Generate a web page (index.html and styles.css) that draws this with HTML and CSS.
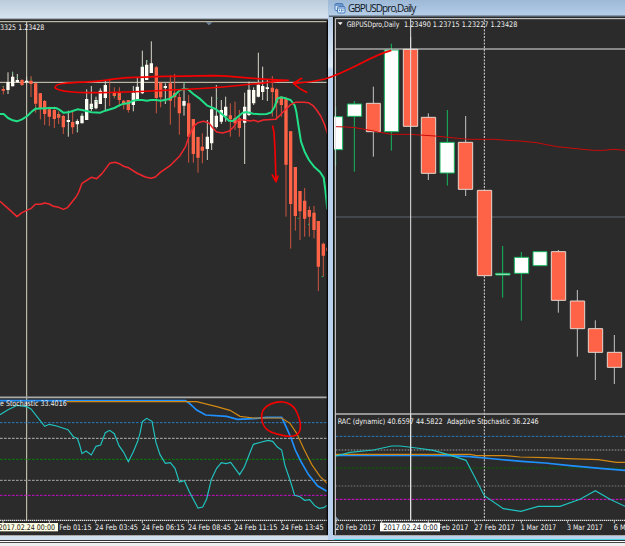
FILE: index.html
```html
<!DOCTYPE html>
<html lang="en">
<head>
<meta charset="utf-8">
<title>GBPUSDpro</title>
<link rel="stylesheet" href="styles.css">
</head>
<body>
<main class="workspace">
<section class="window window-left">
<header class="titlebar titlebar-left"></header>
<svg class="plot" viewBox="0 63 984 1542">
<rect class="bg" x="0" y="63" width="984" height="1542"/>
<path class="cream" d="M0 65H984"/>
<path d="M617 67h21l-7 5l-4 4l-4-4z" fill="#72849a"/>
<g class="guide"><path d="M0 247H984M80 66V1560"/></g>
<path class="wick orange" d="M10 258V283M66 237V258M93 228V291M107 249V338M121 279V358M134 300V375M148 320V378M163 320V384M176 334V372M190 345V402M218 335V402M329 236V318M343 262V295M358 262V320M371 300V328M385 300V338M469 198V340M482 248V322"/>
<path class="wick white" d="M24 217V282M38 215V259M52 222V249M80 230V250M205 332V410M232 358V397M246 340V370M260 268V360M274 258V333M288 290V328M301 265V312M316 243V330M400 258V334M412 232V303M427 152V282M440 180V240M454 124V219M496 250V312"/>
<path class="body orange" d="M10 267V272M66 240V255M93 242V252M107 250V311M121 280V325M134 303V342M148 328V350M163 330V357M176 342V353M190 348V382M218 366V382M343 278V288M358 278V300M371 302V313M385 300V330M469 202V294M482 248V292"/>
<path class="body white" d="M24 246V270M38 230V259M52 240V247M80 242V247M205 360V366M232 363V373M246 347V370M260 297V360M274 311V327M288 300V325M301 272V312M316 255V294M400 278V315M412 260V300M427 200V280M440 194V240M454 190V219M496 258V264"/>
<g transform="translate(480 0)">
<path class="wick orange" d="M31 225V374M44 222V322M58 280V404M86 285V488M100 357V488M114 410V518M127 400V490M211 310V410M225 305V390M238 330V410M337 228V350M350 265V358M364 288V350M378 290V650M392 393V746M406 501V692M420 573V720M434 564V710M448 619V710M462 618V715M475 663V873M490 728V830"/>
<path class="wick white" d="M72 250V347M142 360V480M155 290V450M169 255V385M184 300V372M197 290V365M254 278V492M267 245V348M281 262V315M295 158V292M308 200V300M322 238V303"/>
<path class="body orange" d="M31 250V302M44 278V292M58 291V340M86 310V410M100 357V462M114 411V473M127 440V452M211 346V358M225 355V370M238 355V384M337 263V276M350 268V310M364 290V315M378 294V494M392 394V612M406 501V648M420 573V634M434 602V656M448 630V650M462 638V690M475 663V800M490 731V767M498 748h6"/>
<path class="body white" d="M72 303V317M142 410V447M155 328V430M169 347V381M184 330V365M197 320V347M254 320V368M267 269V345M281 270V310M295 254V290M308 258V276M322 262V267"/>
</g>
<path class="tick" d="M8 260h3M36 219h3M50 232h3M92 237h3M105 322h3M120 326h3M176 345h3M203 392h3M232 390h3M245 345h3M275 322h3M287 304h3M342 290h3M357 290h3M370 312h3M386 318h3M428 198h3M440 183h3M496 304h3M552 250h3M650 295h3M680 350h3M893 655h3M924 673h3M965 830h4"/>
<path class="green" d="M0 342H11L24 354L38 361L51 364L66 358L82 348L96 334L107 326L150 324L168 324L178 329L190 338L205 337L218 333L232 328L246 330L260 333L274 337L301 338L316 332L343 324L358 316L371 311L385 310L400 302L412 300H427L440 302L454 300H469L482 302L496 299L508 297L525 285L538 272L552 266L564 268L580 282L598 295L622 317L647 327L669 345L687 362L698 363L712 352L728 338L740 336L760 341L780 343L800 342L814 337L824 320L832 296L842 292L857 295L872 300L884 316L889 335L895 375L903 425L914 455L927 480L944 502L960 516L971 533L976 570L982 628"/>
<path class="red" d="M0 604L24 625L51 650L66 638L80 631L94 625L106 613L122 613L134 609L148 612L160 619L176 622L190 628L202 623L216 606L228 591L236 577L246 550L260 541L274 532L290 536L306 521L329 490L345 487L358 491L371 499L385 503L410 519L436 531L453 535L466 531L481 517L510 497L540 467L557 439L568 406L580 380L594 368L610 364L626 368L638 383L650 396L668 399L686 394L699 383L714 361L728 359L750 363L762 361L774 365L790 360L826 358L840 346L855 330L872 314L886 307H912L925 308L938 316L950 330L962 348L973 372L984 406"/>
<path d="M0 1192H984" stroke="#a9a9a9" stroke-width="5"/>
<g fill="none">
<path class="dash" stroke="#2879bb" d="M0 1268H984"/><path class="dash" stroke="#b5b5b5" d="M0 1315H984"/><path class="dash" stroke="#087d08" d="M0 1378H984"/><path class="dash" stroke="#aaa" d="M0 1441H984"/><path class="dash" stroke="#c410c4" d="M0 1486H984"/>
<path class="blueline" d="M0 1202H556L566 1208L590 1230L617 1245L680 1249L712 1258L760 1256L800 1252H845L858 1280L872 1311L886 1350L903 1385L925 1423L953 1458L984 1475"/>
<path class="orangeline" d="M200 1205H590L650 1220L690 1231L720 1249L760 1254H845L870 1270L890 1300L913 1350L935 1393L960 1429L984 1452"/>
<path class="cyanline" d="M0 1244L24 1229L52 1216L80 1220L93 1227L134 1279L148 1273L170 1278L204 1289L220 1310L232 1315L239 1335L246 1361L258 1353L274 1365L288 1339L302 1335L316 1298L329 1291L343 1301L357 1337L371 1357L385 1385L400 1355L413 1324L420 1300L427 1265L440 1255L456 1264L468 1328L480 1364L496 1390L511 1388L525 1405L538 1446L553 1442L568 1475L594 1524L608 1521L620 1497L634 1438L650 1405L664 1388L678 1391L692 1387L719 1424L733 1401L748 1363L760 1333L785 1326L804 1321L818 1324L832 1341L845 1350L855 1397L870 1440L884 1486L900 1490L914 1501L929 1499L944 1517L958 1525L971 1523L984 1514"/>
</g>
<path stroke="#ddd" stroke-width="4" stroke-dasharray="4 2" d="M0 1561H984"/>
<path class="axis-tick" d="M9 1561v9M148 1561v9M287 1561v9M427 1561v9M565 1561v9M705 1561v9M845 1561v9"/>
<g class="label">
<text x="0" y="90" textLength="133" lengthAdjust="spacingAndGlyphs">3325 1.23428</text>
<text x="0" y="1218" textLength="200" lengthAdjust="spacingAndGlyphs">e Stochastic 33.4016</text>
<text x="178" y="1589" textLength="97" lengthAdjust="spacingAndGlyphs">Feb 01:15</text><text x="285" y="1589" textLength="129" lengthAdjust="spacingAndGlyphs">24 Feb 03:45</text><text x="425" y="1589" textLength="129" lengthAdjust="spacingAndGlyphs">24 Feb 06:15</text><text x="564" y="1589" textLength="129" lengthAdjust="spacingAndGlyphs">24 Feb 08:45</text><text x="703" y="1589" textLength="129" lengthAdjust="spacingAndGlyphs">24 Feb 11:15</text><text x="842" y="1589" textLength="129" lengthAdjust="spacingAndGlyphs">24 Feb 13:45</text>
</g>
<rect x="0" y="1569" width="174" height="25" fill="#ffffe4"/>
<text class="label dark" x="-4" y="1589" textLength="169" lengthAdjust="spacingAndGlyphs">2017.02.24 00:00</text>
<path class="edge" d="M982 63V1605"/>
</svg>
<div class="bottom-frame"></div>
</section>
<section class="window window-right">
<header class="titlebar titlebar-right">
<svg class="app-icon" viewBox="0 0 12 12"><g fill="#d7e9fb" stroke="#4b7cba"><rect x="1" y="1.5" width="8" height="7" rx="1"/><path d="M1 3h8" stroke-width="1.5"/><rect x="3.5" y="4.5" width="7.5" height="6.5" rx="1"/><path d="M3.5 6H11M5.5 9V7.5M7.5 9.5V7.5M9 9V7.5"/></g></svg>
<span class="title">GBPUSDpro,Daily</span>
</header>
<div class="frame">
<svg class="plot" viewBox="1002 51 873 1554">
<rect class="bg" x="1002" y="51" width="873" height="1554"/>
<g transform="translate(975 0)">
<path d="M38 67h15l-7 8z" fill="#fff"/>
<path stroke="#697078" stroke-width="2.5" d="M30 651H900"/>
<path stroke="#ddd" stroke-width="3" stroke-dasharray="6 4" d="M478 58V1560"/>
<g class="green-candle"><path d="M32 320V498M88 303V515M199 131V452M367 330V557M533 738V893M589 756V962"/><path d="M10 350H53V449H10zM67 312H110V349H67zM178 150H221V395H178zM345 427H388V519H345zM568 772H611V820H568zM624 755H666V797H624zM512 820H555V825H512z"/></g>
<g class="orange-candle"><path d="M145 260V470M257 110V148M310 340V540M422 348V588M700 750V938M757 870V1070M811 961V1140M868 1005V1152"/><path d="M124 310H166V395H124zM235 148H278V379H235zM289 352H332V520H289zM400 427H443V568H400zM457 571H500V827H457zM679 755H722V901H679zM736 903H779V986H736zM790 986H833V1057H790zM847 1057H890V1102H847z"/></g>
<path class="thin-red" d="M32 380L65 381L90 383L130 390L165 397L200 403H255L330 408L400 415L435 418H505L547 421L585 423L635 428L695 440L765 447L805 451H835L865 448L900 451"/>
<path class="white-guide" d="M30 147H900M257 57V1560"/>
<path stroke="#b9b9b9" stroke-width="5" d="M32 1242H900"/>
</g>
<g fill="none">
<path class="dash" stroke="#2879bb" d="M1007 1309H1875"/><path class="dash dots" stroke="#999" d="M1007 1350H1875"/><path class="dash" stroke="#075f07" d="M1007 1404H1875"/><path class="dash dots" stroke="#777" d="M1007 1458H1875"/><path class="dash" stroke="#d810d8" d="M1007 1498H1875"/>
<path class="blueline" d="M1007 1366H1255L1350 1367L1410 1370L1485 1377L1565 1384L1635 1389L1710 1397L1800 1405L1875 1411"/>
<path class="orangeline" d="M1007 1363H1410L1430 1367H1515L1560 1371L1635 1373L1700 1376L1795 1379L1850 1387H1875"/>
<path class="cyanline" d="M1007 1368L1050 1357L1120 1350L1175 1338H1200L1250 1344L1300 1351L1355 1367L1398 1381L1409 1402L1453 1487L1510 1526L1563 1534L1615 1519H1680L1740 1498L1786 1472L1830 1498L1875 1519"/>
</g>
<path class="white-guide" d="M1232 1240V1561"/>
<path stroke="#ddd" stroke-width="4" stroke-dasharray="4 2" d="M1007 1561H1875"/>
<path d="M1007 1548l10 12h-10z" fill="#8296ae"/>
<path class="axis-tick" d="M1008 1561v9M1145 1561v9M1285 1561v9M1424 1561v9M1564 1561v9M1703 1561v9M1843 1561v9"/>
<g class="label">
<text x="1040" y="80" textLength="158" lengthAdjust="spacingAndGlyphs">GBPUSDpro,Daily</text><text x="1212" y="80" textLength="340" lengthAdjust="spacingAndGlyphs">1.23490 1.23715 1.23227 1.23428</text>
<text x="1013" y="1271" textLength="315" lengthAdjust="spacingAndGlyphs">RAC (dynamic) 40.6597 44.5822</text><text x="1341" y="1271" textLength="275" lengthAdjust="spacingAndGlyphs">Adaptive Stochastic 36.2246</text>
<text x="1006" y="1589" textLength="121" lengthAdjust="spacingAndGlyphs">20 Feb 2017</text><text x="1315" y="1589" textLength="90" lengthAdjust="spacingAndGlyphs">Feb 2017</text><text x="1423" y="1589" textLength="121" lengthAdjust="spacingAndGlyphs">27 Feb 2017</text><text x="1562" y="1589" textLength="107" lengthAdjust="spacingAndGlyphs">1 Mar 2017</text><text x="1701" y="1589" textLength="107" lengthAdjust="spacingAndGlyphs">3 Mar 2017</text><text x="1841" y="1589" textLength="36" lengthAdjust="spacingAndGlyphs">6 M</text>
</g>
<rect x="1140" y="1568" width="180" height="26" fill="#fff"/>
<text class="label dark" x="1150" y="1589" textLength="163" lengthAdjust="spacingAndGlyphs">2017.02.24 0:00</text>
<path stroke="#ddd" stroke-width="3" fill="none" d="M1006 1604V56H1875"/>
</svg>
</div>
<div class="bottom-frame"></div>
</section>
</main>
<footer class="status-edge"></footer>
<svg class="annotations" viewBox="0 0 1875 1638">
<path d="M865 241C760 238 710 228 640 227C560 228 430 231 385 233S320 243 275 245C220 248 163 248 165 263C175 275 230 278 290 278S430 274 510 270C660 265 700 257 760 252S820 242 865 241"/>
<path d="M1172 152C1110 168 1060 210 975 237C930 248 910 248 880 250M905 235L880 250L900 266L920 277"/>
<path d="M818 378L822 397L825 450L828 545L817 525M828 545L834 528"/>
<path d="M799 1220C810 1210 832 1204 850 1206S882 1220 887 1230S901 1258 901 1275S900 1297 889 1305C872 1315 830 1303 813 1296S785 1272 785 1252S790 1229 799 1220z"/>
</svg>
</body>
</html>
```
FILE: styles.css
```css
* { box-sizing: border-box; }
body { margin: 0; width: 625px; height: 546px; overflow: hidden; position: relative; background: #efefef; display: flex; flex-direction: column; }
.workspace { display: flex; height: 540px; }
.window { display: flex; flex-direction: column; }
.window-left { width: 328px; }
.window-right { width: 297px; padding-left: 1px; background: linear-gradient(#9db9d6, #b7cde6 20px, #dce9f6 66px, #b9d1ed 70px); }
.titlebar { flex: none; display: flex; align-items: center; }
.titlebar-left { height: 21px; background: linear-gradient(#bdccdb, #d5e2ef 18px, #777f86 19px, #242424 20px); }
.titlebar-right { height: 17px; padding-left: 5px; gap: 2px; background: linear-gradient(#9db9d6, #b4cde8 15px, #55606a 16px); }
.app-icon { width: 12px; height: 12px; flex: none; margin-top: -2px; }
.title { font: 10px/14px "Open Sans", "Noto Sans", sans-serif; letter-spacing: -.95px; color: #10151c; margin-top: -2px; white-space: nowrap; }
.frame { margin-left: 4px; border-left: 1px solid #111; height: 518px; display: flex; }
.plot { display: block; flex: none; }
.window-left .plot { width: 328px; height: 514px; }
.window-right .plot { width: 291px; height: 518px; }
.bottom-frame { flex: 1; border-top: 1px solid #aaa; background: #d2dfed; }
.window-right .bottom-frame { background: #b9d1eb; border-bottom: 1px solid #45d6e8; margin-left: 5px; }
.status-edge { height: 6px; background: linear-gradient(#303030 0 1px, #fff 1px 2px, #454545 2px 3px, #efefef 3px); }
.annotations { position: absolute; left: 0; top: 0; width: 625px; height: 546px; pointer-events: none; }
.annotations path { fill: none; stroke: #f40000; stroke-width: 5; stroke-linecap: round; stroke-linejoin: round; }
.bg { fill: #2b2b2b; }
.cream, .guide path { fill: none; stroke: #d8d5bd; stroke-width: 3; }
.edge { stroke: #080808; stroke-width: 4; }
.wick { fill: none; stroke-width: 3; }
.body { fill: none; stroke-width: 10; }
.orange { stroke: #ff6347; }
.white { stroke: #fffef5; }
.wick.orange { stroke: #cc563f; }
.wick.white { stroke: #d8d6c9; }
.tick { stroke: #16c75d; stroke-width: 3; }
.green { fill: none; stroke: #20df87; stroke-width: 6; stroke-linejoin: round; }
.red { fill: none; stroke: #f0262d; stroke-width: 4.5; stroke-linejoin: round; }
.thin-red { fill: none; stroke: #cc0909; stroke-width: 3; }
.dash { stroke-width: 3; stroke-dasharray: 8 4; }
.dots { stroke-dasharray: 5 4; }
.orangeline { stroke: #d18914; stroke-width: 3.5; }
.blueline { stroke: #1e90ff; stroke-width: 5; }
.cyanline { stroke: #20c4c0; stroke-width: 3.5; }
.axis-tick { stroke: #bbb; stroke-width: 3; }
.label { font: 23px "DejaVu Sans Condensed", "DejaVu Sans", sans-serif; fill: #f0f0f0; }
.label.dark { fill: #151515; }
.green-candle path { fill: none; stroke: #16b660; stroke-width: 3; }
.green-candle path + path { fill: #fff; }
.orange-candle path { stroke: #c5c5c5; stroke-width: 3; }
.orange-candle path + path { fill: #ff6347; stroke: #e4d5cc; }
.white-guide { fill: none; stroke: #e4e4e4; stroke-width: 3; }
```
